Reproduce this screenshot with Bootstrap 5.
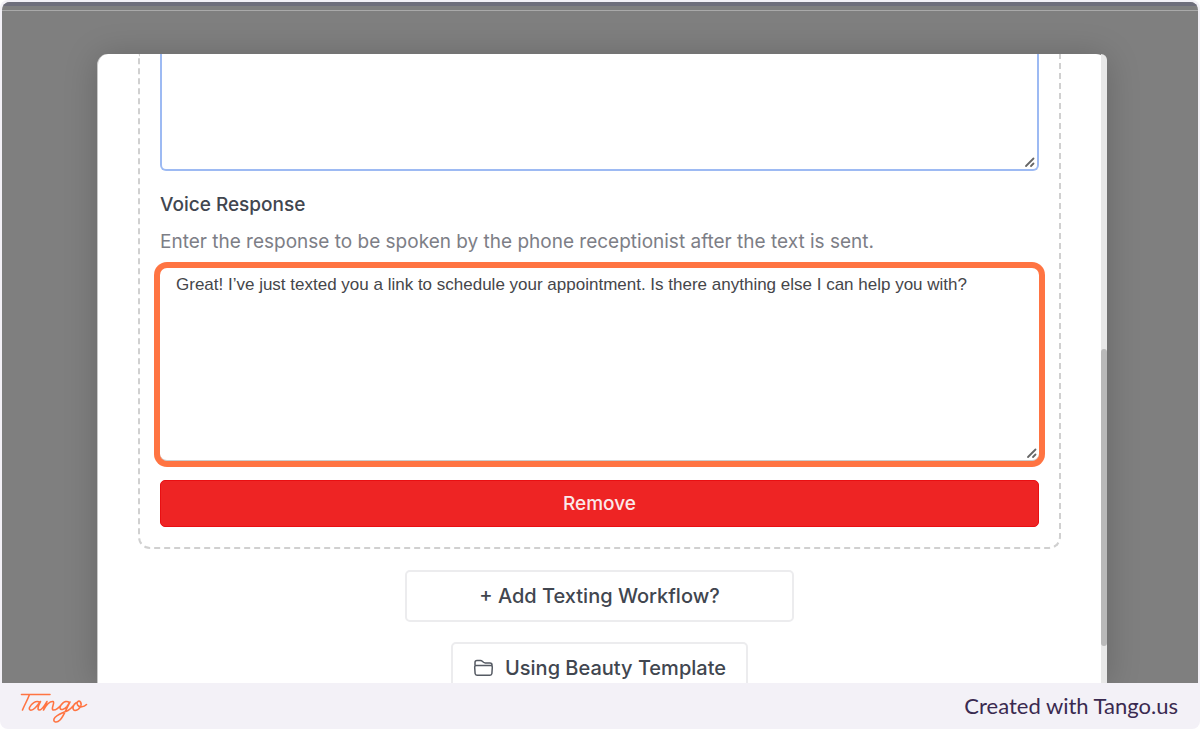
<!DOCTYPE html>
<html lang="en">
<head>
<meta charset="utf-8">
<meta name="viewport" content="width=device-width, initial-scale=1">
<title>Texting workflow</title>
<link href="https://cdn.jsdelivr.net/npm/bootstrap@5.3.0/dist/css/bootstrap.min.css" rel="stylesheet">
<style>
  body { font-family: Inter, "Open Sans", sans-serif; color: #41464f; background: #fff; }
  .frame { background: #f3f1f7; border-radius: 8px; padding: 2px 2px 0; }
  .stage { background: #7f7f7f; border-radius: 8px 8px 0 0; }
  .page-edge { height: 9px; border-top: 4px solid #6e6e7b; border-bottom: 1px solid #a9a9a9; }
  .dialog-panel { min-height: 0; margin: 43px 91px 0 95px; background: #fff; border-radius: 11px 11px 0 0; border-left: 1px solid #c8c8c8; box-shadow: 0 2px 34px rgba(0,0,0,.2); }
  .dialog-main { padding: 0 40px; min-width: 0; }
  .workflow { border: 2px dashed #d0d0d0; border-top: 0; border-radius: 0 0 12px 12px; padding: 0 20px 20px; }
  .field { display: block; width: 100%; resize: vertical; color: #45464a; background: #fff; font: 17px/20px "Liberation Sans", sans-serif; padding: 7px 16px; }
  .field:focus { outline: 0; }
  .field::-webkit-resizer { background: url("data:image/svg+xml,%3Csvg xmlns='http://www.w3.org/2000/svg' width='15' height='15' fill='none' stroke='%23666' stroke-width='1.800' stroke-linecap='round'%3E%3Cpath d='M4 12 11.500 4.500M9 12 11.500 9.500'/%3E%3C/svg%3E") no-repeat; }
  .field-text { height: 117px; border: 2px solid #9dbaf3; border-top: 0; border-radius: 0 0 6px 6px; }
  .field-voice { height: 193px; border: 0; border-bottom: 1px solid #ccc; border-radius: 7px; box-shadow: 0 0 0 6px #ff7442; }
  .field-label { font-size: 19px; line-height: 24px; font-weight: 500; margin-top: 22px; }
  .field-help { font-size: 19px; line-height: 24px; color: #7d7e86; margin: 13px 0 14px; }
  .btn-line { font-size: 20px; line-height: 24px; font-weight: 500; color: #41464f; background: #fff; border: 2px solid #ececee; border-radius: 5px; height: 52px; }
  .btn-remove { font-size: 19px; line-height: 24px; font-weight: 500; color: #fbe9e9; background: #ee2424; border: 1px solid #e90f12; border-radius: 5px; height: 47px; margin-top: 19px; }
  .btn-add { width: 389px; margin-top: 21px; }
  .btn-template { width: 297px; margin-top: 20px; }
  .scroll-track { width: 6px; background: #e8e8e8; border-radius: 0 11px 0 0; overflow: hidden; }
  .scroll-thumb { background: #b9b9b9; border-radius: 3px; flex: 297 0 0; }
  .scroll-before { flex: 295 0 0; }
  .scroll-after { flex: 37 0 0; }
  .credit { height: 46px; padding: 0 20px 0 15px; color: #3a2a50; }
  .credit a { font: 22px/24px Lato, sans-serif; color: inherit; text-decoration: none; }
</style>
</head>
<body>
<div class="frame d-flex flex-column vh-100 overflow-hidden">
  <main class="stage d-flex flex-column flex-grow-1 overflow-hidden">
    <div class="page-edge flex-shrink-0"></div>
    <section class="dialog-panel d-flex flex-grow-1">
      <div class="dialog-main flex-grow-1 overflow-hidden">
        <div class="workflow">
          <textarea class="field field-text" aria-label="Text message"></textarea>
          <label class="field-label d-block" for="voice">Voice Response</label>
          <p class="field-help" id="voice-help">Enter the response to be spoken by the phone receptionist after the text is sent.</p>
          <textarea class="field field-voice" id="voice" aria-describedby="voice-help">Great! I’ve just texted you a link to schedule your appointment. Is there anything else I can help you with?</textarea>
          <button type="button" class="btn btn-remove w-100">Remove</button>
        </div>
        <div class="d-flex flex-column align-items-center">
          <button type="button" class="btn btn-line btn-add">+ Add Texting Workflow?</button>
          <button type="button" class="btn btn-line btn-template d-flex align-items-center justify-content-center gap-2 px-0">
            <svg width="24" height="20" viewBox="0 0 24 20" fill="none" stroke="#555a63" stroke-width="1.500" stroke-linejoin="round" aria-hidden="true"><path d="M2 7V4.500Q2 2.500 4 2.500H7.500Q8.500 2.500 9.300 3.200L10.500 4.300Q11.200 4.900 12.200 4.900H17Q19 4.900 19 7V8M1.700 9.200Q1.600 7.600 3.300 7.600H17.700Q19.400 7.600 19.300 9.200L18.900 15.500Q18.700 17.300 17 17.300H4Q2.300 17.300 2.100 15.500ZM2 7L2.200 8.200"/></svg>
            <span>Using Beauty Template</span>
          </button>
        </div>
      </div>
      <div class="scroll-track d-flex flex-column flex-shrink-0">
        <div class="scroll-before"></div><div class="scroll-thumb"></div><div class="scroll-after"></div>
      </div>
    </section>
  </main>
  <footer class="credit d-flex align-items-center justify-content-between flex-shrink-0">
    <svg width="76" height="40" viewBox="0 0 76 40" fill="none" stroke="#ff7442" stroke-width="1.600" stroke-linecap="round" stroke-linejoin="round" role="img" aria-label="Tango"><path d="M4.500 8.500H33M12.500 8.500C10.500 14 7.500 19 5.500 24M23 16.500C19 13.500 14 18 12.500 21.500C11.500 25 15 25 18 22C20.500 19.500 22 17.500 23.500 15.500C21.500 19 20 23.500 22 24C25 24.500 28 18.500 30 15.500C29 18.500 27.500 21.500 26.500 24C29 19.500 33 15 36 15.500C38.500 16.500 33.500 22.500 36 24C39.500 24.500 43 20.500 45 18C47 15.500 50 14.500 52.500 16.500M52.500 16.500C48 13.500 43.500 18 43 21.500C43 25 47.500 23.500 50 20.500L53 16C49 23 47 30 43 34C40 37 36 36.500 37 33C38.500 29 46 27 51 24.500C55 22.500 57 18.500 59.500 16.500M59.500 16.500C56 18 54.500 24 58 24.500C62 24.500 65.500 19 63.500 16C61.500 13.500 59 17 60.500 19C62.500 22 67 21 69.500 18.500"/></svg>
    <a href="#">Created with Tango.us</a>
  </footer>
</div>
<script src="https://cdn.jsdelivr.net/npm/bootstrap@5.3.0/dist/js/bootstrap.bundle.min.js"></script>
</body>
</html>
